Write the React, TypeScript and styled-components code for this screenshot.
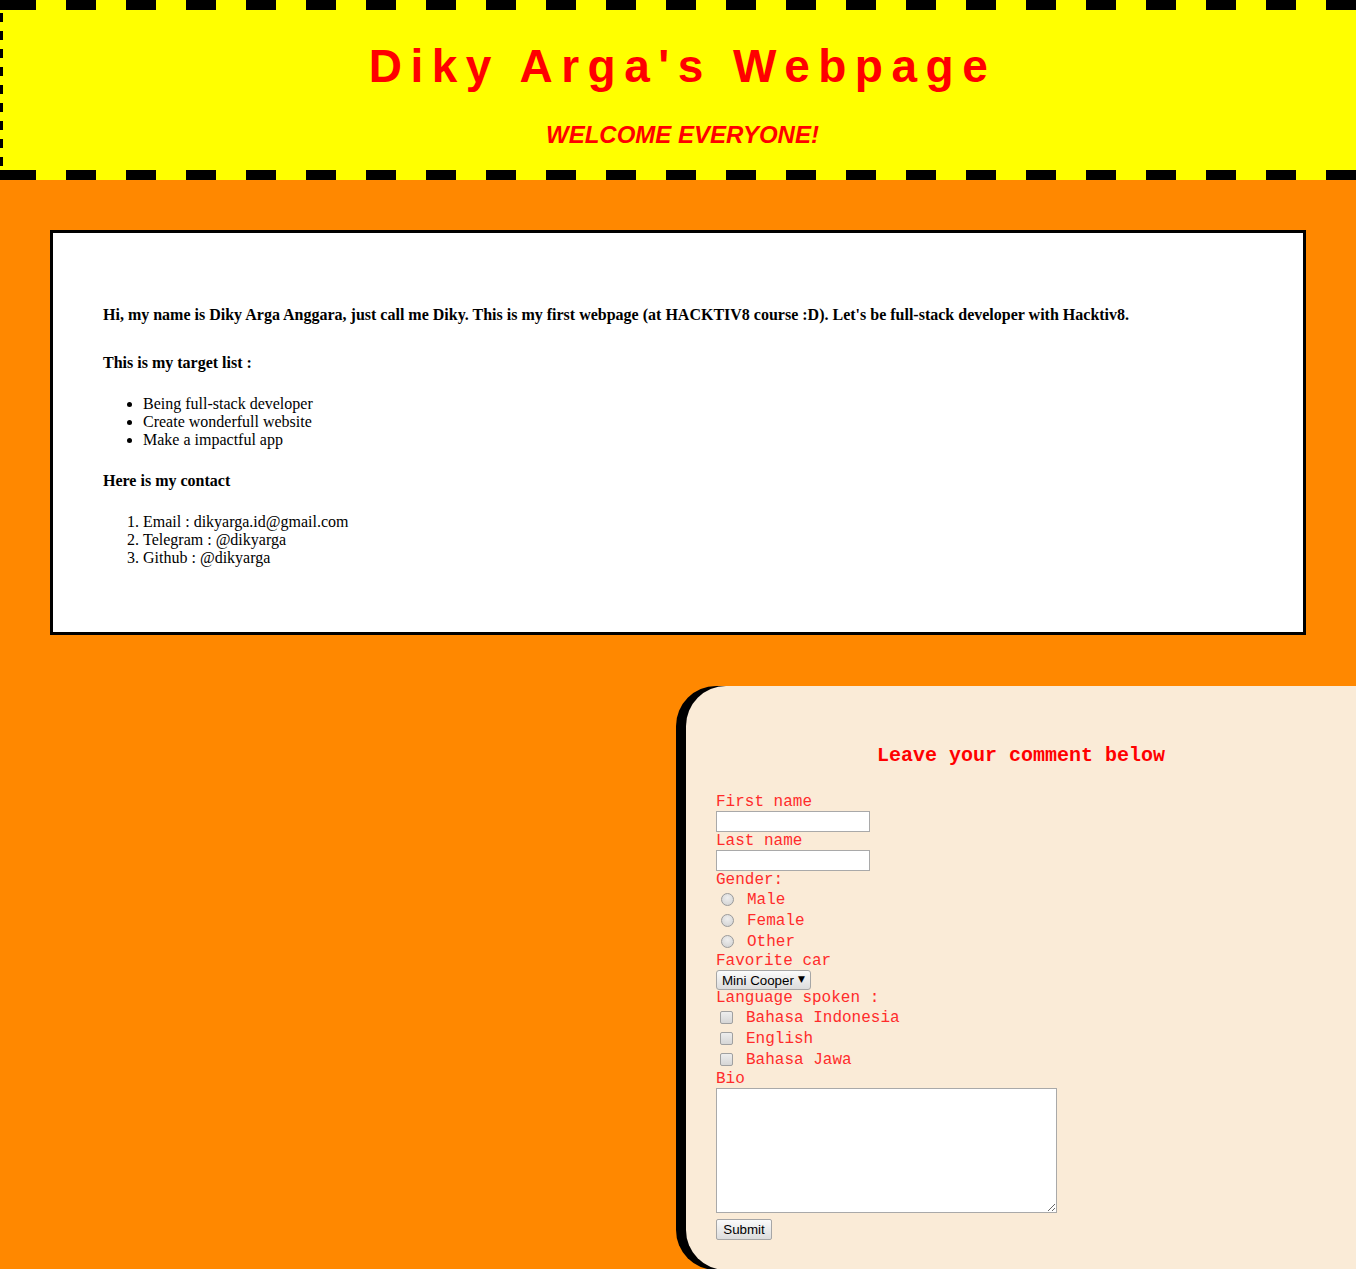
import styled, { createGlobalStyle } from 'styled-components'

const GlobalStyle = createGlobalStyle`
  html, body {
    margin: 0;
    padding: 0;
  }
  body {
    background: #ff8800;
    font-family: 'Liberation Serif', 'Times New Roman', serif;
    overflow-x: hidden;
  }
`

// dashed frame drawn as background strips: top, bottom, left, and the corners
const Header = styled.header`
  box-sizing: border-box;
  height: 180px;
  margin-right: -6px;
  padding: 10px 0 10px 3px;
  background-color: #ffff00;
  background-image: linear-gradient(#000, #000),
    linear-gradient(#000, #000),
    linear-gradient(90deg, #000 50%, transparent 50%),
    linear-gradient(90deg, #000 50%, transparent 50%),
    linear-gradient(#000 50%, transparent 50%);
  background-size: 6px 10px, 6px 10px, 60px 10px, 60px 10px, 3px 18px;
  background-position: 0 0, 0 100%, 6px 0, 6px 100%, 0 13px;
  background-repeat: no-repeat, no-repeat, repeat-x, repeat-x, repeat-y;
  text-align: center;
  font-family: 'Liberation Sans', Arial, sans-serif;
  color: #ff0000;
`

const Title = styled.h1`
  margin: 30px 0 28px;
  font-size: 46px;
  line-height: 53px;
  font-weight: bold;
  letter-spacing: 8.5px;
`

const Subtitle = styled.h2`
  margin: 0;
  font-size: 24px;
  line-height: 28px;
  font-style: italic;
  font-weight: bold;
`

const Main = styled.main`
  padding: 50px 50px 0;
`

const AboutBox = styled.section`
  background: #fff;
  border: 3px solid #000;
  padding: 50px;
  font-size: 16px;
  line-height: 18px;
  color: #000;
`

const Heading = styled.h4<{ $first?: boolean }>`
  margin: ${(p) => (p.$first ? '23px 0 30px' : '23px 0')};
  font-size: 16px;
  font-weight: bold;
`

const List = styled.ul`
  margin: 23px 0 16px;
  padding-left: 40px;
`

const NumList = styled.ol`
  margin: 23px 0 15px;
  padding-left: 40px;
`

const FormArea = styled.div`
  display: flex;
  justify-content: flex-end;
  margin-top: 51px;
`

const CommentForm = styled.form`
  width: 670px;
  box-sizing: border-box;
  padding: 30px;
  background: #faebd7;
  border-radius: 40px 0 0 40px;
  box-shadow: -10px 0 0 #000;
  font-family: 'Liberation Mono', 'Courier New', monospace;
  font-size: 16px;
  color: #ff2b2b;
  display: flex;
  flex-direction: column;
  align-items: flex-start;
`

const FormTitle = styled.h3`
  align-self: stretch;
  margin: 28px 0 26px;
  text-align: center;
  font-size: 20px;
  font-weight: bold;
  line-height: 23px;
  color: #ff0000;
`

const Label = styled.label`
  display: block;
  height: 18px;
  line-height: 18px;
  white-space: pre;
`

const TextInput = styled.input`
  box-sizing: border-box;
  width: 154px;
  height: 21px;
  margin: 0;
  padding: 1px 2px;
  border: 1px solid #a9a9a9;
  background: #fff;
  font: 13.33px 'Liberation Sans', Arial, sans-serif;
`

const OptionRow = styled.label`
  display: flex;
  align-items: center;
  height: 21px;
  line-height: 18px;
  white-space: pre;
`

const Radio = styled.input`
  appearance: none;
  box-sizing: border-box;
  width: 13px;
  height: 13px;
  margin: 0 3px 0 5px;
  border: 1px solid #9a9a9a;
  border-radius: 50%;
  background: radial-gradient(circle at 50% 35%, #eeeeee, #cfcfcf);
`

const Check = styled.input`
  appearance: none;
  box-sizing: border-box;
  width: 13px;
  height: 13px;
  margin: 0 3px 0 4px;
  border: 1px solid #a0a0a0;
  border-radius: 2px;
  background: linear-gradient(#ededed, #d6d6d6);
`

const OptionText = styled.span<{ $gap: number }>`
  margin-left: ${(p) => p.$gap}px;
`

const SelectWrap = styled.div`
  position: relative;
  height: 19px;
`

const Select = styled.select`
  appearance: none;
  box-sizing: border-box;
  width: 95px;
  height: 20px;
  margin: 0;
  padding: 0 10px 0 5px;
  border: 1px solid #a6a6a6;
  border-radius: 3px;
  background: linear-gradient(#fbfbfb, #dcdcdc);
  color: #000;
  font: 13.33px 'Liberation Sans', Arial, sans-serif;
`

const Arrow = styled.span`
  position: absolute;
  right: 6px;
  top: 4px;
  font: 9px 'DejaVu Sans', sans-serif;
  line-height: 10px;
  color: #000;
  pointer-events: none;
`

const Bio = styled.textarea`
  box-sizing: border-box;
  width: 341px;
  height: 125px;
  margin: 0;
  padding: 2px;
  border: 1px solid #a9a9a9;
  background: #fff;
  font: 13.33px 'Liberation Mono', monospace;
`

const SubmitButton = styled.button`
  box-sizing: border-box;
  width: 56px;
  height: 21px;
  margin-top: 6px;
  padding: 0;
  border: 1px solid #a6a6a6;
  border-radius: 2px;
  background: linear-gradient(#fafafa, #dcdcdc);
  color: #000;
  font: 13.33px 'Liberation Sans', Arial, sans-serif;
`

export default function App() {
  return (
    <>
      <GlobalStyle />
      <Header>
        <Title>Diky Arga's Webpage</Title>
        <Subtitle>WELCOME EVERYONE!</Subtitle>
      </Header>

      <Main>
        <AboutBox>
          <Heading $first>
            Hi, my name is Diky Arga Anggara, just call me Diky. This is my
            first webpage (at HACKTIV8 course :D). Let's be full-stack developer
            with Hacktiv8.
          </Heading>
          <Heading>This is my target list :</Heading>
          <List>
            <li>Being full-stack developer</li>
            <li>Create wonderfull website</li>
            <li>Make a impactful app</li>
          </List>
          <Heading>Here is my contact</Heading>
          <NumList>
            <li>Email : dikyarga.id@gmail.com</li>
            <li>Telegram : @dikyarga</li>
            <li>Github : @dikyarga</li>
          </NumList>
        </AboutBox>
      </Main>

      <FormArea>
        <CommentForm onSubmit={(e) => e.preventDefault()}>
          <FormTitle>Leave your comment below</FormTitle>

          <Label htmlFor="firstname">First name</Label>
          <TextInput id="firstname" type="text" />
          <Label htmlFor="lastname">Last name</Label>
          <TextInput id="lastname" type="text" />

          <Label>Gender:</Label>
          {['Male', 'Female', 'Other'].map((g) => (
            <OptionRow key={g}>
              <Radio type="radio" name="gender" value={g.toLowerCase()} />
              <OptionText $gap={10}>{g}</OptionText>
            </OptionRow>
          ))}

          <Label htmlFor="car">Favorite car</Label>
          <SelectWrap>
            <Select id="car">
              <option>Mini Cooper</option>
              <option>Volkswagen</option>
              <option>Fiat</option>
            </Select>
            <Arrow>▼</Arrow>
          </SelectWrap>

          <Label>Language spoken :</Label>
          {['Bahasa Indonesia', 'English', 'Bahasa Jawa'].map((l) => (
            <OptionRow key={l}>
              <Check type="checkbox" value={l} />
              <OptionText $gap={10}>{l}</OptionText>
            </OptionRow>
          ))}

          <Label htmlFor="bio">Bio</Label>
          <Bio id="bio" />
          <SubmitButton type="submit">Submit</SubmitButton>
        </CommentForm>
      </FormArea>
    </>
  )
}
